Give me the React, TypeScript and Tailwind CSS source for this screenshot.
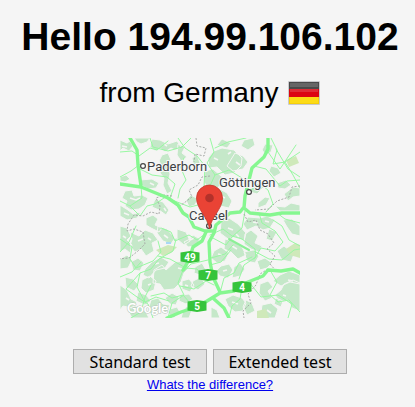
const forests = [
  'M0 2l7 3 3-2 3 5-4 5-6-3-3 3z',
  'M14 0h16l-3 4-6 2-4-2z',
  'M32 1l8 1 8 4 9-3 4 6-6 3-4-2-6 4-5-4-4 3-6-4z',
  'M42 17l6-2 3 7-3 6 2 8-2 9 4 8-5 3-4-9 1-7-4-5 2-7-3-5z',
  'M58 6l7 3-3 6 5 4-6 4-4-6z',
  'M0 39l6-2 4 4-5 3-5-1z',
  'M20 42l12-1 7 4-3 5-8 1-7-4z',
  'M5 53l7-1 2 6 8-1 6 3-3 7-6 4-8 1-6-4 2-5-5-3z',
  'M0 67l8 5 5 4 8-2-4 6-10 2-7-4z',
  'M35 61l8 3 6 8-3 5-7-5-7-3z',
  'M26 80l7-3 5 4-3 6 7 3-3 4-8-4-5-3z',
  'M72 20l5-3 3 8-6 5z M66 62l5-5 7 4-3 6-6 2z',
  'M88 20l6-7 8-3 12 2 8 8-1 8-7 7-9 2-8-8-8 1z',
  'M102 1l9 4-4 5-10-3z M124 2l9-2 2 7-7 5-7-4z',
  'M115 15l8 3 5 6-5 7-10 2-6-5z',
  'M85 33l8-2 8 7 5 2-3 8-5 1-1 7-8-4-5-8z',
  'M98 50l9 5 5 8-3 7-9-2-4-7z',
  'M132 48l9-4 3 5-7 7-7-2z M138 65l7-6 5 1-4 7-8 3z',
  'M145 6l8 1-2 7-5 3-4-5z M151 28l7 2 3 5-7 4-5-6z',
  'M157 45l9-3 5 5-6 4-7-1z M164 56l9-7 7 1v8l-7 1-5 4z',
  'M155 68l10 1 6-4 9 2v6h-20z',
  'M128 79l12 1 7-2 8 4-5 8-7 2-7-4-9 4-4-6z',
  'M163 82l9-1 8 7v10l-8-2-5-7z',
  'M101 84l8-4 9 6 8 9-2 8-9-4-7 2-8-6z',
  'M105 101l8 2 9 6 4 8-8 4-7-7-7-3z',
  'M94 113l7-4 8 6-4 8-8 2-6-5z',
  'M125 96l6-4 7 6-3 7 7 3-3 6-8-3-7-5z',
  'M149 91l8 3-5 9-6-2z M157 113l7-5 10 8-3 8-9-2z',
  'M124 114l9-2 6 6-4 7-8-2z M137 123l8-3 7 5-5 5-7 2z',
  'M101 128l8-2 4 6-5 8-8-2-4-5z M114 129l6-4 5 6-5 7-8 2z',
  'M160 137l9-4 11 4v9l-10-2-9 4-8-5z',
  'M164 146l9-4 7 3v28l-8-3-4-8-8 2-5-7 6-5z',
  'M140 146l8-3 5 6-5 4 4 7-7 3-6-8z',
  'M105 161l8-4 9 3 4 5-3 8-8 1-7-6z',
  'M126 162l6 3 3 8-8 4-4-8z M142 167l9-2 7 6-3 9h-10l-4-6z',
  'M91 169l6 3 3 8h-9z M156 160l7 3-2 6-7-3z',
  'M0 88l7 2 4 8-4 4 5 5-2 8-5-4-5 3z',
  'M10 94l9 4 6-6 8 3 5 7-6 3 2 8-8 5-5-7-6 3-5-6 2-7z',
  'M38 88l9 3 8 9-4 6-8-3-6-8z M57 91l9 3 4 9-6 4-7-6z',
  'M0 121l7-4 5 5-4 8-8 1z M11 124l7-4 6 5-4 8-7-1z',
  'M25 131l7-7 9-5 8 5-4 6-9 2-7 8-6-3z',
  'M34 132l8-5 4 5 9-8 11-1 3 7-5 5-3 9-7 7-10 1-4-6-7-1z',
  'M22 142l8-4 6 5-2 9-8 3-5-5z M5 139l8 2 6 6-5 6-8-4z',
  'M0 147l7 5 4 9 6 3-5 6-9-2-3 4z M18 154l8 3 5 6-6 4-9-4z',
  'M7 171l8-3 9 2 5 10H12z M31 162l7-2 5 6 7 1-4 8-7-4-6 6-5-5z',
  'M45 160l7-5 7 4-3 8-6-1z M50 171l7-2 3 5-6 6-5-2z',
  'M62 143l7-2 5 6-4 7-8-3z M73 143l8-4 4 7-7 6-7-4z',
  'M60 157l9-1 4 5-7 5-7-3z M75 129l7-4 4 7-6 5-6-2z',
  'M73 97l7 4-4 7-8 1-4-5 6-3z M67 168l5 4-3 8h-8l2-7z',
]
const clearings = [
  'M2 8l5 1 M44 6l3 2 M10 60l6 2 4-2 M4 75l5 2 M30 45l4 2 M44 70l2 3',
  'M94 20l4 2 M108 16l3-2 M101 58l4 2 M116 24l4 3',
  'M133 84l5 1 M145 83l4 1 M108 90l5 2 M116 96l3 3 M112 108l5 3 M98 116l4 1',
  'M168 142l5 1 M163 157l3 1 M112 164l6 2 M147 172l4 3 M103 133l4-1',
  'M3 98l3 2 M18 103l5-2 M28 100l3 2 M44 97l4 3 M35 126l4-1 M58 130l4 1',
  'M28 147l3-1 M6 160l3 2 M17 174l4 1 M37 167l4 2 M65 147l3 1 M70 102l4-2',
]
const roads = [
  'M0 14l12-1 7 5 11-8 7 2 11-9',
  'M19 27l-8 6L0 39 M20 31l12 6 15 2 8 7-5 14',
  'M30 0l3 9 15 4 14-4 9-9',
  'M64 20l-4 8 6 14-6 9-2 9',
  'M0 63l10 5 12-8-1-12',
  'M10 68l10 10 7-10 8-2 12-8',
  'M52 62l18 7 12-3 7 24',
  'M58 0l7 10 12 8 8 10-1 21',
  'M90 0l4 14-7 11 8 12-6 13',
  'M95 10l13-6 18-4 M95 37l14-5 13 8 8 14',
  'M134 28l12 3 14 17 7-5 13-1',
  'M151 0l6 12-4 14 12-2 15-10 M156 11l12 20 12 8',
  'M148 14l12 17 16-24 M165 24l8 13 7 13',
  'M128 54l12-8 8 6 5 14-7 8',
  'M125 73l-3 17-10 9-6 8-15-8',
  'M139 75l3 10 13 8 8 11-8 9-14-3-7 11',
  'M157 75l8 6 15 4 M180 108l-11-6-7-14-9-6',
  'M90 97l13-6 9 7 10 3 13 10 1 8-12 8-5 14',
  'M91 120l14-4 8-9 M90 127l11-3 10-12',
  'M134 113l15 8 13 1 12-10 6-1',
  'M100 155l4-15 10-5 5-10 13-6',
  'M122 149l-2 12-8 7-3 12',
  'M150 132l7 12-7 13 8 7 11-2 11 12',
  'M129 144l12 15 17-2 14 9-4 14',
  'M89 93l-12 9-8-5-14 6-4-9-10-4',
  'M0 114l9-10 7-16 M0 101l12 8-2 12 6 9 17-7 8-9-3-11',
  'M56 101l-3 12-14 8-8 10-11 4-3 14 8 15 11-5 13 4',
  'M0 139l12-5 9-10 M20 135l-14 16 11 8 11 7 5 14',
  'M31 147l-6 12-4 15-10 6',
  'M63 132l-5 13 6 12-12 8-4 15',
  'M64 133l7-7 17-4 M60 148l14 3 12-8 8 4',
  'M31 158l13-3 8 5 11-3 7 8 16-2',
  'M38 118l12 3 16 9 11 1 7 9',
]
const borders = [
  'M76 0l1 8 9 2-2 8-9-2-1 8',
  'M90 38l-8 1-4 8-9 5 3 7-8 6-6 4',
  'M52 58l-8-1-8 3 4 8-1 8-8-2-8 4-9-1-6 9-1 7 7-2 9 3 2 12-7 7-9 7-12 1-2 10',
  'M180 48l-8 1-3 10-12 4-8 8-14 1',
  'M124 76l4 8 8-2 4 10 8 4 6 9-7 6 8 7-5 8 7 8',
  'M148 131l-8 5-4 11-8 9 3 9-8 8 1 7',
]
const motorways = [
  'M10 0l7 12 1 15 3 21',
  'M0 46l21 3 27 11 10 7 5 8 6 4 5 10 11 4h8',
  'M148 0v11l-4 8-12 11-3 12-4 16-1 12 6 5 20 2 12-2h18',
  'M124 69l-4 5-10 1-8 7-6 5-2 8-5 9 1 20 3 15 7 15',
  'M86 94l-4 9-9 6-4 13-6 10',
  'M47 180l14-6 18-6 21-13 14-2 14-9 15-6 5-6 13 1 12-2 7 4',
  'M94 161l10 9 5 10',
]
const shields = [
  { n: '49', x: 70, y: 119 },
  { n: '7', x: 88, y: 137 },
  { n: '4', x: 122, y: 149 },
  { n: '5', x: 77, y: 168 },
]
const towns = [
  { name: 'Paderborn', x: 27, y: 33, cx: 23, cy: 28 },
  { name: 'Göttingen', x: 99, y: 49, cx: 129, cy: 54 },
  { name: 'Cassel', x: 69, y: 82, cx: 89, cy: 88 },
]

function LocationMap() {
  return (
    <svg role="img" aria-label="Map around Cassel" width="180" height="180" viewBox="0 0 180 180" className="font-[Roboto,sans-serif]">
      <rect width="180" height="180" fill="#f5f5f4" />
      <path d={forests.join(' ')} fill="#c5e8c9" stroke="#f5f5f4" strokeWidth="1" />
      <path d={clearings.join(' ')} fill="none" stroke="#f5f5f4" strokeWidth="1.6" />
      <path d="M36 112l12-5 9 2-6 6-8 3z M166 111l9-6 5 2v13l-10-3z M137 173l9-2 3 9h-12z M166 22l10-4 3 7-10 4z" fill="#cfe9ba" />
      <rect x="46" y="104" width="5" height="2" fill="#a9d8f5" />
      <g fill="none" strokeLinejoin="round" strokeLinecap="round">
        <path d={roads.join(' ')} stroke="#98f8a2" strokeWidth="1" />
        <path d={borders.join(' ')} stroke="#a9aca9" strokeWidth="1" strokeDasharray="2 1.5" strokeLinecap="butt" />
        <path d={motorways.join(' ')} stroke="#86f790" strokeWidth="3.4" />
        <path d="M109 101l20 11" stroke="#8cf096" strokeWidth="2" />
      </g>
      {shields.map((s) => (
        <g key={s.n}>
          <path transform={`translate(${s.x} ${s.y})`} d="M-9.5-4.5L0-6l9.500 1.500v9L0 6l-9.500-1.500z" fill="#35c43b" />
          <text x={s.x} y={s.y + 4} textAnchor="middle" fontSize="10" fontWeight="700" fill="#fff">{s.n}</text>
        </g>
      ))}
      {towns.map((t) => (
        <g key={t.name}>
          <circle cx={t.cx} cy={t.cy} r="2.4" fill="#fff" stroke="#444" strokeWidth="1.2" />
          <text x={t.x} y={t.y} fontSize="13" fill="#3c4043" stroke="#f7f7f7" strokeWidth="2" paintOrder="stroke">{t.name}</text>
        </g>
      ))}
      <path d="M89.500 91C88 79 76.500 71 76.500 60a13 13 0 0 1 26 0C102.500 71 91 79 89.500 91z" fill="#ea4335" stroke="#c5372c" strokeWidth=".8" />
      <circle cx="89.500" cy="60" r="4.300" fill="#b3312a" />
      <text x="7" y="175" fontSize="13" fontWeight="700" fill="#fff" stroke="#bcc8bd" strokeWidth="1" paintOrder="stroke" className="font-[Lato,sans-serif]">Google</text>
    </svg>
  )
}

function GermanFlag() {
  return (
    <svg role="img" aria-label="German flag" width="32" height="24" viewBox="0 0 32 24">
      <rect width="32" height="24" rx="1" fill="#c9c9cc" />
      <path d="M1 1h30v7H1z" fill="#4a4a4a" />
      <path d="M2 2h28v4H2z" fill="#666" />
      <path d="M1 8h30v8H1z" fill="#dc0512" />
      <path d="M2 8h28v3H2z" fill="#df2c36" />
      <path d="M1 16h30v7H1z" fill="#f5cf0b" />
      <path d="M2 16h28v6H2z" fill="#fcdb16" />
    </svg>
  )
}

const buttonClass =
  "h-[25px] w-[134px] border border-[#adadad] bg-[#e1e1e1] text-base leading-5 font-['Noto_Sans','Open_Sans',sans-serif]"

export default function App() {
  return (
    <main className="flex min-h-screen flex-col items-center bg-[#f5f5f5] pt-[13px] pl-[5px] font-['Liberation_Sans',Arial,sans-serif] text-black">
      <h1 className="text-[39px] leading-12 font-bold whitespace-nowrap">Hello 194.99.106.102</h1>
      <p className="mt-4 flex items-center gap-[10px] text-[28px] leading-8">
        from Germany <GermanFlag />
      </p>
      <div className="mt-[29px]">
        <LocationMap />
      </div>
      <div className="mt-[31px] flex gap-[6px]">
        <button type="button" className={buttonClass}>Standard test</button>
        <button type="button" className={buttonClass}>Extended test</button>
      </div>
      <a href="#difference" className="mt-[3px] text-[13px] leading-4 text-[#0000ee] underline">Whats the difference?</a>
    </main>
  )
}
